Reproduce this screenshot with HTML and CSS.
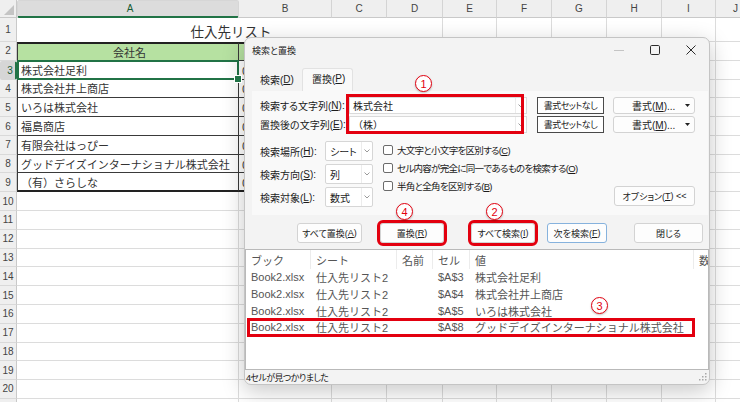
FILE: index.html
```html
<!DOCTYPE html>
<html lang="ja">
<head>
<meta charset="utf-8">
<title>検索と置換</title>
<link rel="stylesheet" href="styles.css">
</head>
<body>
<div class="app">
  <div class="sheet">
    <div class="corner"></div>
    <div class="ch sel">A</div><div class="ch">B</div><div class="ch">C</div><div class="ch">D</div><div class="ch">E</div><div class="ch">F</div><div class="ch">G</div><div class="ch">H</div><div class="ch">I</div><div class="ch">J</div>

    <div class="rh">1</div><div class="c title">仕入先リスト</div><div class="c"></div><div class="c"></div><div class="c"></div><div class="c"></div><div class="c"></div><div class="c"></div>

    <div class="rh">2</div><div class="c t ta hd">会社名</div><div class="c t hd">電話番号</div><div class="c"></div><div class="c"></div><div class="c"></div><div class="c"></div><div class="c"></div><div class="c"></div><div class="c"></div><div class="c"></div>

    <div class="rh sel">3</div><div class="c t ta act">株式会社足利</div><div class="c t">0284-21-0001</div><div class="c"></div><div class="c"></div><div class="c"></div><div class="c"></div><div class="c"></div><div class="c"></div><div class="c"></div><div class="c"></div>

    <div class="rh">4</div><div class="c t ta">株式会社井上商店</div><div class="c t">03-3456-0002</div><div class="c"></div><div class="c"></div><div class="c"></div><div class="c"></div><div class="c"></div><div class="c"></div><div class="c"></div><div class="c"></div>

    <div class="rh">5</div><div class="c t ta">いろは株式会社</div><div class="c t">06-6123-0003</div><div class="c"></div><div class="c"></div><div class="c"></div><div class="c"></div><div class="c"></div><div class="c"></div><div class="c"></div><div class="c"></div>

    <div class="rh">6</div><div class="c t ta">福島商店</div><div class="c t">024-521-0004</div><div class="c"></div><div class="c"></div><div class="c"></div><div class="c"></div><div class="c"></div><div class="c"></div><div class="c"></div><div class="c"></div>

    <div class="rh">7</div><div class="c t ta">有限会社はっぴー</div><div class="c t">045-234-0005</div><div class="c"></div><div class="c"></div><div class="c"></div><div class="c"></div><div class="c"></div><div class="c"></div><div class="c"></div><div class="c"></div>

    <div class="rh">8</div><div class="c t ta">グッドデイズインターナショナル株式会社</div><div class="c t">052-345-0006</div><div class="c"></div><div class="c"></div><div class="c"></div><div class="c"></div><div class="c"></div><div class="c"></div><div class="c"></div><div class="c"></div>

    <div class="rh">9</div><div class="c t ta bot">（有）さらしな</div><div class="c t bot">011-456-0007</div><div class="c"></div><div class="c"></div><div class="c"></div><div class="c"></div><div class="c"></div><div class="c"></div><div class="c"></div><div class="c"></div>

    <div class="rh">10</div><div class="c"></div><div class="c"></div><div class="c"></div><div class="c"></div><div class="c"></div><div class="c"></div><div class="c"></div><div class="c"></div><div class="c"></div><div class="c"></div>
    <div class="rh">11</div><div class="c"></div><div class="c"></div><div class="c"></div><div class="c"></div><div class="c"></div><div class="c"></div><div class="c"></div><div class="c"></div><div class="c"></div><div class="c"></div>
    <div class="rh">12</div><div class="c"></div><div class="c"></div><div class="c"></div><div class="c"></div><div class="c"></div><div class="c"></div><div class="c"></div><div class="c"></div><div class="c"></div><div class="c"></div>
    <div class="rh">13</div><div class="c"></div><div class="c"></div><div class="c"></div><div class="c"></div><div class="c"></div><div class="c"></div><div class="c"></div><div class="c"></div><div class="c"></div><div class="c"></div>
    <div class="rh">14</div><div class="c"></div><div class="c"></div><div class="c"></div><div class="c"></div><div class="c"></div><div class="c"></div><div class="c"></div><div class="c"></div><div class="c"></div><div class="c"></div>
    <div class="rh">15</div><div class="c"></div><div class="c"></div><div class="c"></div><div class="c"></div><div class="c"></div><div class="c"></div><div class="c"></div><div class="c"></div><div class="c"></div><div class="c"></div>
    <div class="rh">16</div><div class="c"></div><div class="c"></div><div class="c"></div><div class="c"></div><div class="c"></div><div class="c"></div><div class="c"></div><div class="c"></div><div class="c"></div><div class="c"></div>
    <div class="rh">17</div><div class="c"></div><div class="c"></div><div class="c"></div><div class="c"></div><div class="c"></div><div class="c"></div><div class="c"></div><div class="c"></div><div class="c"></div><div class="c"></div>
    <div class="rh">18</div><div class="c"></div><div class="c"></div><div class="c"></div><div class="c"></div><div class="c"></div><div class="c"></div><div class="c"></div><div class="c"></div><div class="c"></div><div class="c"></div>
    <div class="rh">19</div><div class="c"></div><div class="c"></div><div class="c"></div><div class="c"></div><div class="c"></div><div class="c"></div><div class="c"></div><div class="c"></div><div class="c"></div><div class="c"></div>
    <div class="rh">20</div><div class="c"></div><div class="c"></div><div class="c"></div><div class="c"></div><div class="c"></div><div class="c"></div><div class="c"></div><div class="c"></div><div class="c"></div><div class="c"></div>
    <div class="rh">21</div><div class="c"></div><div class="c"></div><div class="c"></div><div class="c"></div><div class="c"></div><div class="c"></div><div class="c"></div><div class="c"></div><div class="c"></div><div class="c"></div>
  </div>

  <div class="dlg">
    <div class="tbar">
      <span class="ttl">検索と置換</span>
      <div class="wctl">
        <span class="wbtn"><svg width="10" height="10" viewBox="0 0 10 10"><path d="M0 5.5h10" stroke="#c4c4c4" stroke-width="1"/></svg></span>
        <span class="wbtn"><svg width="10" height="10" viewBox="0 0 10 10"><rect x="0.5" y="0.5" width="9" height="9" rx="1.2" fill="none" stroke="#2b2b2b" stroke-width="1"/></svg></span>
        <span class="wbtn"><svg width="10" height="10" viewBox="0 0 10 10"><path d="M0.5 0.5l9 9M9.5 0.5l-9 9" stroke="#2b2b2b" stroke-width="1"/></svg></span>
      </div>
    </div>

    <div class="tabs">
      <span class="tab">検索(<u>D</u>)</span>
      <span class="tab on">置換(<u>P</u>)</span>
    </div>

    <div class="panel">
      <div class="frow">
        <label>検索する文字列(<u>N</u>):</label>
        <div class="inp"><span>株式会社</span><i class="dd"><svg width="6" height="4" viewBox="0 0 6 4"><path d="M0.5 0.5L3 3L5.5 0.5" fill="none" stroke="#9a9a9a"/></svg></i></div>
        <button class="none">書式セットなし</button>
        <button class="fmt"><span>書式(<u>M</u>)...</span><svg class="arr" width="5" height="3" viewBox="0 0 5 3"><path d="M0 0h5L2.5 3z" fill="#222"/></svg></button>

        <label>置換後の文字列(<u>E</u>):</label>
        <div class="inp"><span>（株）</span><i class="dd"><svg width="6" height="4" viewBox="0 0 6 4"><path d="M0.5 0.5L3 3L5.5 0.5" fill="none" stroke="#9a9a9a"/></svg></i></div>
        <button class="none">書式セットなし</button>
        <button class="fmt"><span>書式(<u>M</u>)...</span><svg class="arr" width="5" height="3" viewBox="0 0 5 3"><path d="M0 0h5L2.5 3z" fill="#222"/></svg></button>
      </div>

      <div class="opts">
        <div class="sels">
          <label>検索場所(<u>H</u>):</label>
          <div class="sel"><span>シート</span><i class="dd"><svg width="6" height="4" viewBox="0 0 6 4"><path d="M0.5 0.5L3 3L5.5 0.5" fill="none" stroke="#9a9a9a"/></svg></i></div>
          <label>検索方向(<u>S</u>):</label>
          <div class="sel"><span>列</span><i class="dd"><svg width="6" height="4" viewBox="0 0 6 4"><path d="M0.5 0.5L3 3L5.5 0.5" fill="none" stroke="#9a9a9a"/></svg></i></div>
          <label>検索対象(<u>L</u>):</label>
          <div class="sel"><span>数式</span><i class="dd"><svg width="6" height="4" viewBox="0 0 6 4"><path d="M0.5 0.5L3 3L5.5 0.5" fill="none" stroke="#9a9a9a"/></svg></i></div>
        </div>
        <div class="checks">
          <div class="chk"><span class="box"></span>大文字と小文字を区別する(<u>C</u>)</div>
          <div class="chk"><span class="box"></span>セル内容が完全に同一であるものを検索する(<u>O</u>)</div>
          <div class="chk"><span class="box"></span>半角と全角を区別する(<u>B</u>)</div>
        </div>
        <button class="optbtn">オプション(<u>T</u>) &lt;&lt;</button>
      </div>
    </div>

    <div class="btns">
      <button class="b1">すべて置換(<u>A</u>)</button>
      <button class="b2 hl">置換(<u>R</u>)</button>
      <button class="b3 hl">すべて検索(<u>I</u>)</button>
      <button class="b4 def">次を検索(<u>F</u>)</button>
      <button class="b5">閉じる</button>
    </div>

    <div class="res">
      <div class="rrow rhead"><span>ブック</span><span>シート</span><span>名前</span><span>セル</span><span>値</span><span>数式</span></div>
      <div class="rrow"><span>Book2.xlsx</span><span>仕入先リスト2</span><span></span><span>$A$3</span><span>株式会社足利</span><span></span></div>
      <div class="rrow"><span>Book2.xlsx</span><span>仕入先リスト2</span><span></span><span>$A$4</span><span>株式会社井上商店</span><span></span></div>
      <div class="rrow"><span>Book2.xlsx</span><span>仕入先リスト2</span><span></span><span>$A$5</span><span>いろは株式会社</span><span></span></div>
      <div class="rrow"><span>Book2.xlsx</span><span>仕入先リスト2</span><span></span><span>$A$8</span><span>グッドデイズインターナショナル株式会社</span><span></span></div>
    </div>

    <div class="stat">
      <span>4セルが見つかりました</span>
      <svg class="grip" width="8" height="8" viewBox="0 0 8 8"><g fill="#a8a8a8"><rect x="6" y="0" width="1.5" height="1.5"/><rect x="3" y="3" width="1.5" height="1.5"/><rect x="6" y="3" width="1.5" height="1.5"/><rect x="0" y="6" width="1.5" height="1.5"/><rect x="3" y="6" width="1.5" height="1.5"/><rect x="6" y="6" width="1.5" height="1.5"/></g></svg>
    </div>
  </div>

  <div class="redbox rb-input"></div>
  <div class="redbox rb-row"></div>
  <span class="mark m1">1</span>
  <span class="mark m2">2</span>
  <span class="mark m3">3</span>
  <span class="mark m4">4</span>
</div>
</body>
</html>
```

FILE: styles.css
```css
* { box-sizing: border-box; margin: 0; padding: 0; }
html, body { width: 740px; height: 402px; overflow: hidden; background: #fff; }
body { font-family: "Liberation Sans", "Noto Sans CJK JP", sans-serif; color: #222; }
.app { position: relative; width: 740px; height: 402px; overflow: hidden; }

/* spreadsheet */
.sheet {
  display: grid;
  grid-template-columns: 17px 222px 93px 55px 56px 54px 55px 55px 55px 54px 40px;
  grid-template-rows: 18px 24px repeat(20, 18.79px);
  font-family: "Noto Sans CJK JP", sans-serif;
  font-size: 11px;
  color: #333;
}
.corner, .ch, .rh, .c { display: flex; align-items: center; overflow: hidden; white-space: nowrap; }
.corner { position: relative; background: #efefef; border-right: 1px solid #c9c9c9; border-bottom: 1px solid #c9c9c9; }
.corner::after {
  content: ""; position: absolute; right: 2px; bottom: 2px; width: 0; height: 0;
  border-left: 10px solid transparent; border-bottom: 10px solid #c4c4c4;
}
.ch {
  justify-content: center; background: #efefef;
  border-right: 1px solid #d4d4d4; border-bottom: 1px solid #c9c9c9;
  font-family: "Liberation Sans", sans-serif; font-size: 10px; color: #444;
}
.ch.sel { background: #dcdcdc; color: #185c36; border-bottom: 2px solid #217346; }
.rh {
  justify-content: center; background: #efefef;
  border-right: 1px solid #c9c9c9; border-bottom: 1px solid #d9d9d9;
  font-family: "Liberation Sans", sans-serif; font-size: 10px; color: #444;
}
.rh.sel { background: #d6d6d6; color: #185c36; border-right: 2px solid #217346; }
.c { border-right: 1px solid #dcdcdc; border-bottom: 1px solid #dcdcdc; padding-left: 3px; }
.title { grid-column: span 4; justify-content: center; font-size: 13.5px; border-bottom: 0; padding-top: 2px; }
.t { border-right-color: #3a3a3a; border-bottom-color: #3a3a3a; }
.ta { border-left: 1px solid #3a3a3a; }
.hd { background: #b6e1a1; border-top: 2px solid #222; justify-content: center; }
.bot { border-bottom: 2px solid #222; }
.act { position: relative; overflow: visible; }
.act::after {
  content: ""; position: absolute; left: -1px; top: -1px; right: -1px; bottom: -1px;
  border: 2px solid #217346;
}
.act::before {
  content: ""; position: absolute; right: -4px; bottom: -4px; width: 6px; height: 6px;
  background: #217346; border: 1px solid #fff; z-index: 1;
}

/* dialog */
.dlg {
  position: absolute; left: 244px; top: 37px; width: 466px; height: 348px;
  background: #f3f3f3; border: 1px solid #c4c4c4; border-radius: 7px;
  box-shadow: 0 6px 22px rgba(0, 0, 0, 0.22);
  display: flex; flex-direction: column;
  font-size: 10px; color: #1b1b1b; font-feature-settings: "palt";
  overflow: hidden;
}
.tbar { height: 24px; flex: none; display: flex; align-items: center; padding-left: 7px; }
.ttl { font-size: 9px; }
.wctl { margin-left: auto; display: flex; }
.wbtn { width: 36px; height: 24px; display: flex; align-items: center; justify-content: center; }
.tabs { height: 29px; flex: none; display: flex; align-items: flex-end; padding-left: 7px; }
.tab { width: 50px; height: 21px; padding: 0 0 2px 8px; display: flex; align-items: center; white-space: nowrap; }
.tab.on {
  width: 51px; height: 23px; padding: 0 0 4px 9px; background: #f9f9f9;
  border: 1px solid #e2e2e2; border-bottom: 0; border-radius: 3px 3px 0 0;
}
.panel { height: 124px; flex: none; margin: 0 1px 0 7px; background: #f9f9f9; padding: 6px 13px 0 8px; }

.frow {
  display: grid; grid-template-columns: 89px 188px 76px 82px;
  grid-template-rows: 17px 17px; row-gap: 2px;
}
.frow .inp { width: 178px; }
.frow .none { width: 67px; }
.frow label, .sels label { display: flex; align-items: center; white-space: nowrap; }
.inp {
  background: #fff; border: 1px solid #dadada; display: flex; align-items: center;
  padding-left: 3px; font-feature-settings: normal; font-family: "Noto Sans CJK JP", sans-serif;
}
.inp span, .sel span { flex: 1; white-space: nowrap; }
.dd {
  width: 11px; align-self: stretch; border-left: 1px solid #ececec;
  display: flex; align-items: center; justify-content: center; flex: none;
}

button {
  font: inherit; color: inherit; font-size: 9px; font-feature-settings: "palt";
  background: #fdfdfd; border: 1px solid #d3d3d3; border-radius: 3px;
  display: flex; align-items: center; justify-content: center; padding: 0;
  white-space: nowrap;
}
.none { background: #fff; border: 1px solid #4a4a4a; border-radius: 0; letter-spacing: -0.5px; }
.fmt { justify-content: flex-start; padding: 0 4px 0 18px; font-size: 10px; }
.fmt .arr { margin-left: auto; }

.opts { display: flex; margin-top: 8px; }
.sels { display: grid; grid-template-columns: 65px 48px; grid-auto-rows: 20px; row-gap: 3px; }
.sel {
  background: #fff; border: 1px solid #d6d6d6; border-radius: 2px;
  display: flex; align-items: center; padding-left: 4px;
}
.checks { margin-left: 10px; display: flex; flex-direction: column; }
.chk { height: 18px; display: flex; align-items: center; white-space: nowrap; font-size: 9.5px; letter-spacing: -0.7px; }
.box { width: 10px; height: 10px; border: 1px solid #6b6b6b; border-radius: 2px; background: #fff; margin-right: 4px; flex: none; }
.optbtn { margin-left: auto; align-self: flex-end; width: 81px; height: 20px; margin-bottom: 1px; }

.btns { display: flex; height: 20px; flex: none; margin-top: 8px; padding-left: 52px; }
.btns button { height: 20px; }
.b1 { width: 65px; }
.b2 { width: 64px; margin-left: 18px; }
.b3 { width: 64px; margin-left: 27px; }
.b4 { width: 60px; margin-left: 12px; }
.b5 { width: 69px; margin-left: 27px; }
.hl { outline: 3px solid #e3000f; }
.def { border-color: #86b2dd; }

.res {
  margin-top: 6px; height: 121px; flex: none; background: #fff; border: 1px solid #b9b9b9;
  font-size: 11px; color: #555; font-feature-settings: normal; overflow: hidden;
}
.rrow {
  display: grid; grid-template-columns: 65px 86px 36px 37px 224px 40px;
  height: 16.7px; align-items: center; white-space: nowrap;
}
.rrow span { padding-left: 5px; overflow: hidden; }
.rhead { height: 19px; align-items: stretch; }
.rhead span { border-right: 1px solid #ececec; display: flex; align-items: center; }

.stat { height: 14px; flex: none; display: flex; align-items: center; padding-left: 1px; padding-right: 2px; font-size: 9px; letter-spacing: -0.6px; }
.grip { margin-left: auto; }

/* annotations */
.redbox { position: absolute; border: 3px solid #e3000f; }
.rb-input { left: 346px; top: 94px; width: 178px; height: 40px; }
.rb-row { left: 247px; top: 318px; width: 448px; height: 19px; }
.mark {
  position: absolute; width: 17px; height: 17px; border: 1.3px solid #e3000f; border-radius: 50%;
  background: #fff; color: #e3000f; font-family: "Liberation Sans", sans-serif; font-size: 11px;
  display: flex; align-items: center; justify-content: center;
  box-shadow: 0 1px 2px rgba(0, 0, 0, 0.25);
}
.m1 { left: 415px; top: 75px; }
.m2 { left: 486px; top: 203px; }
.m3 { left: 591px; top: 297px; }
.m4 { left: 396px; top: 203px; }
```
